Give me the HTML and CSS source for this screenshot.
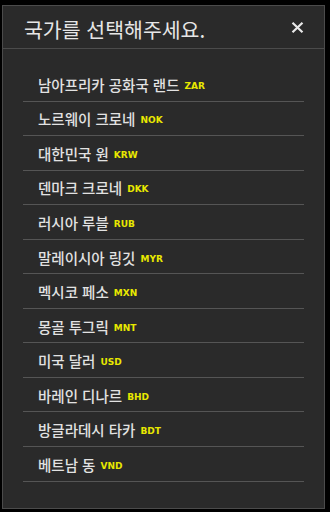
FILE: index.html
```html
<!DOCTYPE html>
<html lang="ko">
<head>
<meta charset="utf-8">
<link rel="stylesheet" href="styles.css">
</head>
<body>
<div class="modal">
  <div class="header">
    <h1 class="title">국가를 선택해주세요.</h1>
    <button class="close" aria-label="닫기">
      <svg width="13" height="11" viewBox="0 0 13 11"><path d="M1.5 0.8 L11.5 10.2 M11.5 0.8 L1.5 10.2" stroke="#e8e8e8" stroke-width="2.2" fill="none"/></svg>
    </button>
  </div>
  <ul class="list">
    <li class="item">남아프리카 공화국 랜드 <span class="code">ZAR</span></li>
    <li class="item">노르웨이 크로네 <span class="code">NOK</span></li>
    <li class="item">대한민국 원 <span class="code">KRW</span></li>
    <li class="item">덴마크 크로네 <span class="code">DKK</span></li>
    <li class="item">러시아 루블 <span class="code">RUB</span></li>
    <li class="item">말레이시아 링깃 <span class="code">MYR</span></li>
    <li class="item">멕시코 페소 <span class="code">MXN</span></li>
    <li class="item">몽골 투그릭 <span class="code">MNT</span></li>
    <li class="item">미국 달러 <span class="code">USD</span></li>
    <li class="item">바레인 디나르 <span class="code">BHD</span></li>
    <li class="item">방글라데시 타카 <span class="code">BDT</span></li>
    <li class="item">베트남 동 <span class="code">VND</span></li>
  </ul>
</div>
</body>
</html>
```
FILE: styles.css
```css
html, body {
  margin: 0;
  padding: 0;
  background: #000;
}
body {
  font-family: "Noto Sans CJK KR", "Noto Sans", sans-serif;
  color: #e2e2e2;
}
.modal {
  box-sizing: border-box;
  width: 323px;
  height: 504px;
  margin: 5px 0 0 2px;
  background: #2a2a2a;
  border: 1px solid #4b4b4b;
  display: flex;
  flex-direction: column;
}
.header {
  box-sizing: border-box;
  height: 43px;
  border-bottom: 1px solid #4b4b4b;
  display: flex;
  align-items: center;
  justify-content: space-between;
  padding: 3px 20px 0 21px;
}
.title {
  margin: 0;
  font-size: 20.5px;
  font-weight: 400;
  color: #e6e6e6;
  letter-spacing: 0;
}
.close {
  background: none;
  border: 0;
  padding: 0;
  margin: -3px 0 0 0;
  width: 13px;
  height: 11px;
  display: flex;
}
.list {
  list-style: none;
  margin: 0;
  padding: 18px 20px 0 20px;
}
.item {
  box-sizing: border-box;
  height: 34.55px;
  border-bottom: 1px solid #555;
  display: flex;
  align-items: center;
  padding: 1px 0 0 15px;
  font-size: 14.5px;
  font-weight: 500;
  white-space: pre;
  color: #e2e2e2;
}
.code {
  font-family: "DejaVu Sans", sans-serif;
  font-weight: 700;
  font-size: 9px;
  color: #e8e800;
  margin-left: 1px;
  padding-top: 3px;
}
```
